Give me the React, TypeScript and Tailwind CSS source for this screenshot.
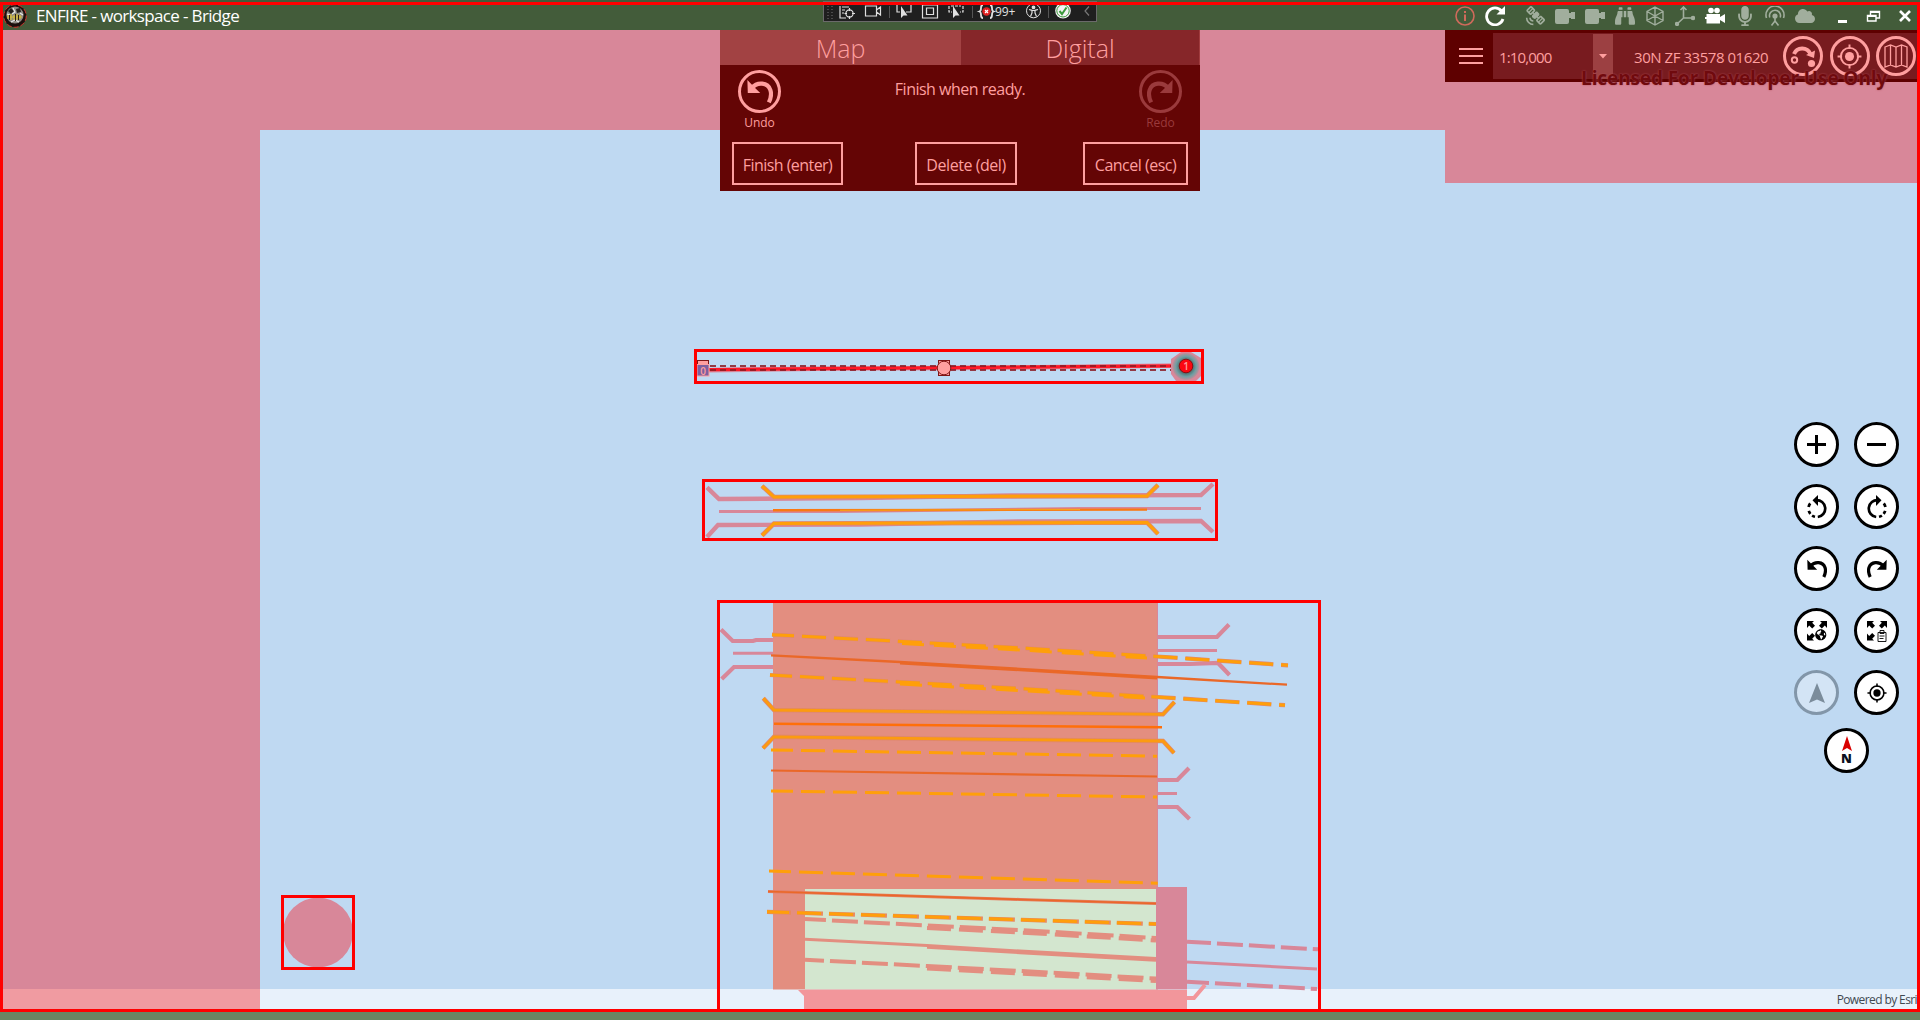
import React from "react";
import { FaBinoculars, FaMicrophone, FaCloud, FaGlobeAmericas } from "react-icons/fa";
import { MdSatelliteAlt } from "react-icons/md";

type Pt = [number, number];
interface Line {
  p: Pt[];
  c: string;
  w: number;
  dash?: string;
  off?: number;
}

const PINK = "#d88799";
const SALMON = "#e38e80";
const ORANGE = "#ff9f0a";
const DEEP = "#ea6828";
const STRIP = "#f2969b";

const shift = (p: Pt[], dy: number): Pt[] => p.map(([x, y]) => [x, y + dy]);

const bridge: Line[] = [
  { p: [[707, 487.3], [719, 499], [860, 498], [1010, 495.5], [1201, 495], [1213, 484]], c: PINK, w: 4.4 },
  { p: [[719, 511.5], [840, 511.5], [960, 510], [1080, 508.5], [1201, 508.5]], c: PINK, w: 3 },
  { p: [[707, 537], [718, 525], [860, 524.5], [1020, 521.5], [1201, 521], [1213, 532]], c: PINK, w: 4.4 },
  { p: [[762, 486], [774, 497], [1147, 496], [1158, 485]], c: "#e08870", w: 4.6 },
  { p: [[762, 486], [774, 497], [1147, 496], [1158, 485]], c: ORANGE, w: 3 },
  { p: [[773, 510.3], [1147, 509.6]], c: "#f97812", w: 2.4 },
  { p: [[840, 510.3], [1080, 509.5]], c: "#f8a51c", w: 1 },
  { p: [[762, 535.5], [774, 523.5], [1147, 522.5], [1158, 534]], c: "#e08870", w: 4.6 },
  { p: [[762, 535.5], [774, 523.5], [1147, 522.5], [1158, 534]], c: ORANGE, w: 3 },
];

const d1: Pt[] = [[772, 634.7], [902, 641.5], [1020, 648], [1157, 656.5], [1288, 665.3]];
const d2: Pt[] = [[770, 675], [900, 682], [1020, 688.5], [1157, 697], [1285, 705.2]];
const s1: Pt[] = [[771, 655.3], [900, 662], [1020, 668.8], [1157, 677], [1287, 684.7]];
const g1: Pt[] = [[805, 919], [927, 925.5], [1020, 930], [1156, 938]];
const g2: Pt[] = [[805, 939.3], [927, 945.5], [1020, 951], [1156, 958.5]];
const g3: Pt[] = [[805, 959.7], [927, 966], [1020, 971], [1156, 978.5]];
const up: Pt[] = [[763.3, 698.3], [774, 710], [1020, 712.7], [1163, 714.3], [1174.5, 702]];
const lo: Pt[] = [[763, 748.3], [774, 736.8], [1020, 739.7], [1163, 741], [1174, 753]];
const b3: Pt[] = [[767, 911.8], [1020, 919.7], [1156, 924]];

const plan: Line[] = [
  { p: [[721, 629.5], [732.7, 641], [753, 641], [756, 640], [773, 640]], c: PINK, w: 4.2 },
  { p: [[733, 653.3], [773, 653.3]], c: PINK, w: 3 },
  { p: [[721.7, 679], [734, 667], [773, 667]], c: PINK, w: 4.2 },
  { p: [[1157, 637], [1217, 637], [1229, 624.5]], c: PINK, w: 4.2 },
  { p: [[1157, 650.5], [1217, 650.5]], c: PINK, w: 3 },
  { p: [[1157, 664], [1190, 664], [1218, 663], [1229.5, 675]], c: PINK, w: 4.2 },
  { p: [[1157, 780], [1177.3, 780], [1189, 768]], c: PINK, w: 4.2 },
  { p: [[1157, 793.5], [1177, 793.5]], c: PINK, w: 3 },
  { p: [[1157, 807], [1177.3, 807], [1189.5, 819]], c: PINK, w: 4.2 },
  { p: d1, c: "#e08870", w: 4.2, dash: "24.2 7.8", off: 2 },
  { p: d1, c: ORANGE, w: 3, dash: "24 8", off: 2 },
  { p: shift([[902, 641.5], [1020, 648], [1147, 656]], 2), c: ORANGE, w: 3, dash: "22 10", off: 0 },
  { p: s1, c: DEEP, w: 2.3 },
  { p: shift([[900, 662], [1020, 668.8], [1157, 677]], 1.5), c: DEEP, w: 2 },
  { p: d2, c: "#e08870", w: 4.2, dash: "24.2 7.8", off: 2 },
  { p: d2, c: ORANGE, w: 3, dash: "24 8", off: 2 },
  { p: shift([[900, 682], [1020, 688.5], [1145, 696]], 2), c: ORANGE, w: 3, dash: "22 10", off: 0 },
  { p: up, c: "#e0886b", w: 4.4 },
  { p: up, c: "#fc9b10", w: 2.8 },
  { p: [[774, 723.7], [1162, 727.3]], c: "#ff6f0a", w: 2.4 },
  { p: lo, c: "#e0886b", w: 4.4 },
  { p: lo, c: "#fc9b10", w: 2.8 },
  { p: [[771, 750], [1157, 756.2]], c: ORANGE, w: 3, dash: "24 8", off: 2 },
  { p: [[771, 770.5], [1157, 776.5]], c: DEEP, w: 2.2 },
  { p: [[771, 791], [1157, 797]], c: ORANGE, w: 3, dash: "24 8", off: 2 },
  { p: [[769, 871], [1020, 879], [1157.7, 883.3]], c: ORANGE, w: 3, dash: "24 8", off: 2 },
  { p: [[768, 891.5], [1020, 899.5], [1156, 903.5]], c: "#e57c60", w: 3 },
  { p: [[768, 891.5], [1020, 899.5], [1156, 903.5]], c: DEEP, w: 1.7 },
  { p: b3, c: "#e88a60", w: 4.2, dash: "26 6", off: 2 },
  { p: b3, c: ORANGE, w: 3, dash: "24 8", off: 2 },
  { p: g1, c: SALMON, w: 4, dash: "26 6", off: 5 },
  { p: shift(g1.slice(1), 2.5), c: SALMON, w: 4, dash: "24 8", off: 0 },
  { p: g2, c: SALMON, w: 3 },
  { p: shift(g2.slice(1), 1.7), c: SALMON, w: 3 },
  { p: g3, c: SALMON, w: 4, dash: "26 6", off: 7 },
  { p: shift(g3.slice(1), 2.5), c: SALMON, w: 4, dash: "24 8", off: 0 },
  { p: [[1187, 941.7], [1318, 949.3]], c: PINK, w: 4, dash: "26 6", off: 2 },
  { p: [[1187, 962], [1317, 969]], c: PINK, w: 3 },
  { p: [[1187, 981.7], [1317, 989]], c: PINK, w: 4, dash: "26 6", off: 4 },
  { p: [[1187, 998], [1194, 998], [1205, 985]], c: STRIP, w: 4 },
];

function Lines({ items }: { items: Line[] }) {
  return (
    <>
      {items.map((l, i) => (
        <polyline
          key={i}
          points={l.p.map((q) => q.join(",")).join(" ")}
          fill="none"
          stroke={l.c}
          strokeWidth={l.w}
          strokeDasharray={l.dash}
          strokeDashoffset={l.off}
        />
      ))}
    </>
  );
}

function MapDrawing() {
  return (
    <svg className="absolute inset-0 h-[979px] w-[1920px]" viewBox="0 30 1920 979">
      <path d="M0 30H1917V183H1445V130H260V989H0Z" fill={PINK} shapeRendering="crispEdges" />
      <rect x="0" y="989" width="1920" height="20" fill="#e8f1fb" />
      <rect x="0" y="989" width="260" height="20" fill="#f09ba1" />
      <circle cx="318" cy="932.5" r="35" fill={PINK} />
      <rect x="773" y="603" width="385" height="386.5" fill={SALMON} />
      <rect x="1157" y="603" width="1" height="285" fill={PINK} />
      <rect x="805" y="889" width="351" height="100" fill="#d3e6cf" />
      <path d="M804 990H1187V1009H804V996L798 990Z" fill={STRIP} />
      <rect x="1156" y="887" width="31" height="102.5" fill={PINK} />
      <Lines items={bridge} />
      <Lines items={plan} />

      <path d="M709 370.2L830 368.6L950 368L1060 367L1180 365.6" stroke={PINK} strokeWidth="4.5" fill="none" />
      <path d="M709 369.6L1180 365.8" stroke="#ff1727" strokeWidth="3.2" fill="none" />
      <path d="M710 366H1176M710 370H1176" stroke="#8b1c26" strokeOpacity=".85" strokeWidth="2" strokeDasharray="6 4" fill="none" />
      <rect x="697.5" y="360.5" width="11" height="15" fill="#ff9f9f" stroke="#801515" />
      <rect x="697" y="364.5" width="12" height="11.5" fill="#7c60a0" stroke="#ff9f9f" />
      <text x="703" y="374.5" fontSize="10" textAnchor="middle" fill="#ff9f9f" fontFamily="Open Sans, sans-serif" fontWeight="600">0</text>
      <rect x="938.5" y="360.5" width="11" height="15" fill="#ff9f9f" stroke="#801515" />
      <circle cx="944" cy="368" r="6.8" fill="#ff9f9f" stroke="#801515" />
      <defs>
        <radialGradient id="halo">
          <stop offset="0.5" stopColor="#4f7373" />
          <stop offset="0.75" stopColor="#6f9fa3" />
          <stop offset="1" stopColor="#c08c98" />
        </radialGradient>
      </defs>
      <path d="M1181 352H1191L1201 358V376L1196 381H1176L1171 374V359Z" fill={PINK} />
      <circle cx="1186" cy="366.5" r="13.5" fill="url(#halo)" />
      <circle cx="1186" cy="366" r="6.8" fill="#fb0710" stroke="#8a0d10" />
      <text x="1186" y="369.7" fontSize="10" textAnchor="middle" fill="#ff9f9f" fontFamily="Open Sans, sans-serif" fontWeight="600">1</text>
    </svg>
  );
}

function UndoArrow({ flip = false, size = 20 }: { flip?: boolean; size?: number }) {
  return (
    <svg width={size} height={size} viewBox="0 0 20 20" className={flip ? "-scale-x-100" : ""}>
      <path d="M3.5 7C8 1.8 16 2.6 18 8.5C19 11.6 18.3 15 16.8 18" fill="none" stroke="currentColor" strokeWidth="3.2" />
      <path d="M0.3 0.8L0.6 10.8H10.2L7 7.6L4 4.6Z" fill="currentColor" />
    </svg>
  );
}

function RotateArrow({ flip = false }: { flip?: boolean }) {
  return (
    <svg width="22" height="24" viewBox="0 0 22 24" className={flip ? "-scale-x-100" : ""} fill="none" stroke="currentColor" strokeWidth="2.7">
      <path d="M10 5.1A8.5 8.5 0 0 1 11.8 22" />
      <path d="M9 21.8A8.5 8.5 0 0 1 6.1 20.5M4.4 18.9A8.5 8.5 0 0 1 2.8 15.9M2.6 12A8.5 8.5 0 0 1 4.2 8.4" />
      <path d="M12 0V11L6.5 5.3Z" fill="currentColor" stroke="none" />
    </svg>
  );
}

function Target({ size = 22 }: { size?: number }) {
  return (
    <svg width={size} height={size} viewBox="0 0 22 22" fill="none" stroke="currentColor" strokeWidth="1.7">
      <circle cx="11" cy="11" r="7.6" />
      <circle cx="11" cy="11" r="4" fill="currentColor" stroke="none" />
      <path d="M11 .5V4.5M11 17.5V21.5M.5 11H4.5M17.5 11H21.5" />
    </svg>
  );
}

function Extent({ kind }: { kind: "globe" | "clip" }) {
  return (
    <span className="relative block size-5">
      <svg width="20" height="20" viewBox="0 0 20 20" className="block">
        <g fill="currentColor">
          <path d="M0 0H7L5.2 1.8L8 4.8L5.2 7.4L2.2 4.6L0 7Z" />
          <path d="M20 0H13L14.8 1.8L12 4.8L14.8 7.4L17.8 4.6L20 7Z" />
          <path d="M0 19.5H7L5.2 17.7L8 14.7L5.2 12.1L2.2 14.9L0 12.5Z" />
        </g>
      </svg>
      {kind === "globe" ? (
        <FaGlobeAmericas className="absolute top-[8.5px] left-[8.5px] size-[11.5px]" />
      ) : (
        <svg className="absolute top-[9px] left-[10px]" width="10" height="12" viewBox="0 0 10 12" fill="none" stroke="currentColor" strokeWidth="0.9">
          <path d="M1 2.5H9V11.5H1ZM3 .5H7V3.5H3ZM2.5 6H7.5M2.5 8.5H6.5" />
        </svg>
      )}
    </span>
  );
}

function MapButton({ children, muted = false }: { children: React.ReactNode; muted?: boolean }) {
  return (
    <button
      className={
        muted
          ? "grid size-[45px] place-items-center rounded-full border-[3px] border-[#8296a9] bg-[#d3e4f5] text-[#7b8c9b]"
          : "grid size-[45px] place-items-center rounded-full border-[3px] border-black bg-white text-black"
      }
    >
      {children}
    </button>
  );
}

function MapTools() {
  return (
    <div className="absolute top-[392px] right-[21px] flex flex-col items-center gap-[13px]">
      <div className="grid grid-cols-2 gap-x-[15px] gap-y-[17px]">
        <MapButton>
          <svg width="19" height="19"><path d="M9.5 0V19M0 9.5H19" stroke="currentColor" strokeWidth="3" /></svg>
        </MapButton>
        <MapButton>
          <svg width="19" height="19"><path d="M0 9.5H19" stroke="currentColor" strokeWidth="3" /></svg>
        </MapButton>
        <MapButton><RotateArrow /></MapButton>
        <MapButton><RotateArrow flip /></MapButton>
        <MapButton><UndoArrow /></MapButton>
        <MapButton><UndoArrow flip /></MapButton>
        <MapButton><Extent kind="globe" /></MapButton>
        <MapButton><Extent kind="clip" /></MapButton>
        <MapButton muted>
          <svg width="16" height="20" viewBox="0 0 16 20"><path d="M8 0L16 20L8 16.5L0 20Z" fill="currentColor" /></svg>
        </MapButton>
        <MapButton><Target size={20} /></MapButton>
      </div>
      <MapButton>
        <span className="flex flex-col items-center">
          <svg width="10" height="15" viewBox="0 0 10 15"><path d="M5 0L10 15L5 12L0 15Z" fill="#d90000" /></svg>
          <span className="mt-px text-[13px] leading-[13px] font-extrabold text-[#0b1020]">N</span>
        </span>
      </MapButton>
    </div>
  );
}

function PanelButton({ label, cls }: { label: string; cls: string }) {
  return (
    <button className={"h-[43px] border-2 border-[#ff9f9f] pt-0.5 text-center text-[16px] whitespace-nowrap " + cls}>{label}</button>
  );
}

function EditPanel() {
  return (
    <section className="absolute top-0 left-[720px] h-[161px] w-[480px] bg-[#640505] text-[#ff9f9f]">
      <div className="flex h-[35px] text-center text-[25px] leading-[36px] font-light">
        <div className="w-[241px] bg-[#a24243]">Map</div>
        <div className="flex-1 border-r border-[#a03c3e] bg-[#862629]">Digital</div>
      </div>
      <div className="flex h-[77px] items-start justify-between px-[18px] pt-[5px]">
        <div className="flex w-[43px] flex-col items-center">
          <span className="grid size-[43px] place-items-center rounded-full border-[3px] border-current"><UndoArrow size={26} /></span>
          <span className="mt-0.5 text-[12px] leading-4">Undo</span>
        </div>
        <p className="pt-[7px] text-[16px] leading-6 tracking-[-0.5px]">Finish when ready.</p>
        <div className="flex w-[43px] flex-col items-center text-[#9a3a3c]">
          <span className="grid size-[43px] place-items-center rounded-full border-[3px] border-current"><UndoArrow size={26} flip /></span>
          <span className="mt-0.5 text-[12px] leading-4">Redo</span>
        </div>
      </div>
      <div className="flex justify-between px-3">
        <PanelButton label="Finish (enter)" cls="w-[111px] tracking-[-0.55px]" />
        <PanelButton label="Delete (del)" cls="ml-1.5 w-[102px] tracking-[-0.45px]" />
        <PanelButton label="Cancel (esc)" cls="w-[105px] tracking-[-0.5px]" />
      </div>
    </section>
  );
}

function Round({ children }: { children: React.ReactNode }) {
  return <span className="grid size-10 place-items-center rounded-full border-[3px] border-[#ff9f9f]">{children}</span>;
}

function ScaleBar() {
  return (
    <section className="absolute top-0 left-[1445px] h-[52px] w-[472px] text-[#ff9f9f]">
      <div className="flex h-full items-center border-y-[3px] border-[#5e0000] bg-[#781b1f] text-[15px]">
        <div className="flex h-full w-12 flex-col items-center justify-center gap-[5px] bg-[#5e0000] pl-1">
          <span className="h-[2px] w-6 bg-[#ff9f9f]" />
          <span className="h-[2px] w-6 bg-[#ff9f9f]" />
          <span className="h-[2px] w-6 bg-[#ff9f9f]" />
        </div>
        <span className="w-[100px] pt-0.5 pl-1.5 tracking-[-0.85px]">1:10,000</span>
        <span className="grid h-[45px] w-5 place-items-center bg-[#9c4042]">
          <svg width="8" height="5"><path d="M0 0H8L4 4.5Z" fill="currentColor" /></svg>
        </span>
        <span className="w-[170px] pt-0.5 pl-[21px] text-[15px] tracking-[-0.45px] whitespace-nowrap">30N ZF 33578 01620</span>
        <span className="flex gap-[6.5px]">
          <Round>
            <svg width="26" height="24" viewBox="0 0 26 24" fill="none" stroke="currentColor">
              <circle cx="4.5" cy="16" r="2.7" strokeWidth="2" />
              <path d="M4 10C7 3 17 2.5 20.5 10" strokeWidth="4" />
              <path d="M16 11L25 6.5L24 14Z" fill="currentColor" stroke="none" />
              <circle cx="21.5" cy="19.5" r="3.6" fill="currentColor" stroke="none" />
            </svg>
          </Round>
          <Round><Target size={25} /></Round>
          <Round>
            <svg width="24" height="26" viewBox="0 0 24 26" fill="none" stroke="currentColor" strokeWidth="1.3">
              <path d="M1 4L6.5 2L12 4L17.5 2L23 4V24L17.5 22L12 24L6.5 22L1 24ZM6.5 2V22M12 4V24M17.5 2V22" />
            </svg>
          </Round>
        </span>
      </div>
      <p className="absolute top-[35px] left-[136px] text-[19px] leading-[26px] font-bold tracking-[-0.1px] whitespace-nowrap text-[#700a0e] [text-shadow:0_0_2px_#b04c56]">
        Licensed For Developer Use Only
      </p>
    </section>
  );
}

function Plug() {
  return (
    <svg width="20" height="20" viewBox="0 0 20 20"><path d="M2 3H12Q14 3 14 5V7H16V6H20V13H16V12H14V16Q14 18 12 18H2Q0 18 0 16V5Q0 3 2 3Z" fill="currentColor" /></svg>
  );
}

function TitleBar() {
  return (
    <header className="flex h-[30px] items-center bg-[#435c3a] pt-px text-white">
      <svg className="ml-[3px]" width="24" height="24" viewBox="0 0 24 24">
        <circle cx="12" cy="12" r="11.3" fill="#1c0f0d" stroke="#d6362c" strokeWidth="1" strokeDasharray="5 2" />
        <circle cx="12" cy="11" r="8.6" fill="#8d8a83" />
        <path d="M5 7L8 4L11 7L8 10ZM13 5L17 4L18 8L14 9Z" fill="#26201e" />
        <path d="M10 4L12 8L9 10M4 10L7 11M17 9L20 11M8 18L12 16L16 18" stroke="#e8e8e8" strokeWidth="1.2" fill="none" />
        <path d="M5 11V15M8 10V16M11 11V16M14 10V16M17 11V15M5 13H19" stroke="#d8bd38" strokeWidth="1.2" />
        <path d="M6.5 11V16M12.5 10V17M15.5 11V16" stroke="#2a2015" strokeWidth="1" />
      </svg>
      <h1 className="ml-[9px] text-[17px] leading-6 whitespace-nowrap tracking-[-0.65px]">ENFIRE - workspace - Bridge</h1>
      <div className="mr-[105px] ml-auto flex items-center gap-2.5 text-[#a1ae9d]">
        <svg width="20" height="20" viewBox="0 0 20 20" fill="none" stroke="#cf6a5b" strokeWidth="1.6">
          <circle cx="10" cy="10" r="9" /><path d="M10 8.5V15M10 5V7" strokeWidth="2" />
        </svg>
        <svg width="20" height="20" viewBox="0 0 20 20" fill="none" stroke="white" strokeWidth="2.8">
          <path d="M16.5 5A8.4 8.4 0 1 0 18 13" /><path d="M20 0V8.5H11.5Z" fill="white" stroke="none" />
        </svg>
        <MdSatelliteAlt className="ml-2.5 size-5 -scale-x-100" />
        <Plug />
        <Plug />
        <FaBinoculars className="size-5" />
        <svg width="20" height="20" viewBox="0 0 20 20" fill="none" stroke="currentColor" strokeWidth="1.4">
          <path d="M10 1L18 5.5V14.5L10 19L2 14.5V5.5ZM2 5.5L10 10L18 5.5M10 10V19M10 1V10M10 10L2 14.5M10 10L18 14.5" />
        </svg>
        <svg width="20" height="20" viewBox="0 0 20 20" fill="none" stroke="currentColor" strokeWidth="1.6">
          <path d="M8.5 1V12L2 18M8.5 12H18M5.5 4L8.5 1L11.5 4" /><circle cx="18" cy="12" r="1.5" fill="currentColor" /><circle cx="2" cy="18" r="1.4" fill="currentColor" />
        </svg>
        <svg width="20" height="20" viewBox="0 0 20 20" fill="white">
          <circle cx="6" cy="4.5" r="2.8" /><circle cx="12" cy="4.5" r="2.8" /><path d="M1.5 8H15V11L20 8V17L15 14V17.5H1.5V13H0V11H1.5Z" />
        </svg>
        <FaMicrophone className="size-5" />
        <svg width="20" height="20" viewBox="0 0 20 20" fill="none" stroke="currentColor" strokeWidth="1.6">
          <path d="M1.5 12A9 9 0 1 1 18.5 12M4.8 11.5A5.5 5.5 0 1 1 15.2 11.5" /><circle cx="10" cy="10" r="1.8" fill="currentColor" /><path d="M10 10V15L6.5 19.5M10 15L13.5 19.5" />
        </svg>
        <FaCloud className="size-5" />
      </div>
      <div className="absolute top-[9px] right-2 flex items-center">
        <span className="mr-[19px] mt-[11px] h-[3px] w-[9px] bg-white" />
        <svg className="mr-[17px]" width="15" height="14" viewBox="0 0 15 14" fill="none" stroke="white" strokeWidth="1.4">
          <path d="M4.5 6V2.5H13.5V9H10.5M1.5 6.5H10V12H1.5Z" /><path d="M4 3H14M1 7H10" strokeWidth="2" />
        </svg>
        <svg width="14" height="14" viewBox="0 0 14 14" stroke="white" strokeWidth="2.6"><path d="M2 2L12 12M12 2L2 12" /></svg>
      </div>
    </header>
  );
}

function DebugBar() {
  return (
    <div className="absolute top-px left-[823px] h-[21px] w-[274px] border border-[#6a6a6a] bg-[#1f1f1f]">
      <div className="flex h-full items-center text-[#e0e0e0]">
        <svg width="272" height="19" viewBox="824 2 272 19" fill="none" stroke="currentColor" strokeWidth="1.2">
          <path d="M828 6V20M832 6V20" stroke="#777" strokeWidth="1" strokeDasharray="1 2" />
          <path d="M840 6V18H846M842 7H849M842 10H845M842 13H844" />
          <circle cx="849.5" cy="13.5" r="3.6" /><path d="M849.5 8V11M849.5 16V19M844.5 13.5H847M852 13.5H855" />
          <path d="M865.5 6H876.5V16H865.5ZM876.5 10L880.5 7V15L876.5 12Z" />
          <path d="M889.5 6V18M972.5 6V18M1048.5 6V18" stroke="#555" strokeWidth="1" />
          <path d="M897 5V12H900M906 12H911V5" />
          <path d="M901 6V18L903.5 15.5H907.5Z" fill="#e0e0e0" stroke="none" />
          <path d="M922.5 5H937.5V18H922.5ZM926.5 8H933.5V14.5H926.5Z" />
          <path d="M949 6V12H952M963 6V12H960M951 6H961" strokeDasharray="3 1" />
          <path d="M953 6V18L955.5 15.5H959.5Z" fill="#e0e0e0" stroke="none" />
          <path d="M983 5Q981 5 981 8Q981 11 979.5 11.5Q981 12 981 15Q981 18 983 18M990 5Q992 5 992 8Q992 11 993.5 11.5Q992 12 992 15Q992 18 990 18" strokeWidth="1.8" />
          <circle cx="986.5" cy="11.5" r="4.2" fill="#e02020" stroke="none" /><path d="M985 10L988 13M988 10L985 13" stroke="white" />
          <text x="995" y="16" fontSize="12" fill="#e0e0e0" stroke="none" fontFamily="Open Sans, sans-serif" letterSpacing="-.1">99+</text>
          <circle cx="1033.5" cy="10.8" r="7" strokeWidth="1" /><circle cx="1033.5" cy="7.3" r="1.3" fill="#e0e0e0" />
          <path d="M1029 9.5L1032 10.3V13L1030.5 16.5M1038 9.5L1035 10.3V13L1036.5 16.5M1032 10.5H1035" />
          <circle cx="1063" cy="10.8" r="7.8" fill="#f4f4f4" stroke="none" /><circle cx="1063" cy="10.8" r="6.2" stroke="#3a9a3a" strokeWidth="1" />
          <path d="M1059.5 11L1062 14L1066.5 7.5" stroke="#3a9a3a" strokeWidth="2" />
          <path d="M1089 6.5L1085 11L1089 15.5" stroke="#777" />
        </svg>
      </div>
    </div>
  );
}

export default function App() {
  return (
    <div className="relative flex h-[1020px] w-[1920px] flex-col overflow-hidden bg-[#6b8563] font-['Open_Sans',sans-serif]">
      <TitleBar />
      <main className="relative h-[979px] bg-[#bfd9f2]">
        <MapDrawing />
        <EditPanel />
        <ScaleBar />
        <MapTools />
        <span className="absolute right-[3px] -bottom-px text-[12px] leading-5 tracking-[-0.6px] text-[#404850]">Powered by Esri</span>
      </main>
      <DebugBar />
      <div className="pointer-events-none absolute top-[2px] left-0 h-[1010px] w-[1920px] border-[3px] border-[#ff0000]" />
      <div className="pointer-events-none absolute top-[349px] left-[694px] h-[35px] w-[510px] border-[3px] border-[#ff0000]" />
      <div className="pointer-events-none absolute top-[479px] left-[702px] h-[62px] w-[516px] border-[3px] border-[#ff0000]" />
      <div className="pointer-events-none absolute top-[600px] left-[717px] h-[412px] w-[604px] border-[3px] border-[#ff0000]" />
      <div className="pointer-events-none absolute top-[895px] left-[281px] h-[75px] w-[74px] border-[3px] border-[#ff0000]" />
    </div>
  );
}
